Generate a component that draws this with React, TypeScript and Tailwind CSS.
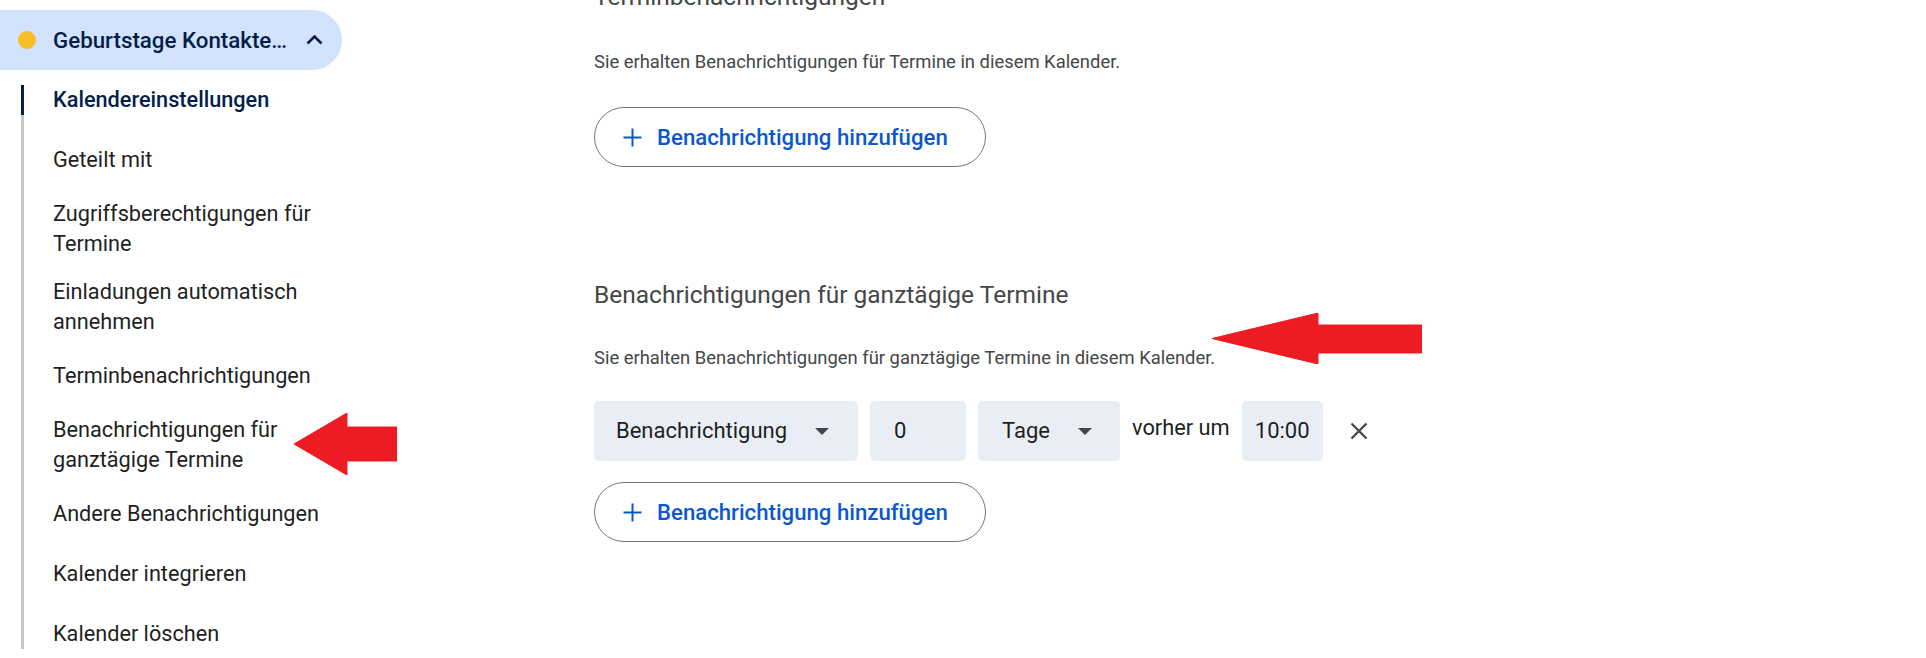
import React from "react";

const navItems: { label: React.ReactNode; active?: boolean; last?: boolean }[] = [
  { label: "Kalendereinstellungen", active: true },
  { label: "Geteilt mit" },
  { label: "Zugriffsberechtigungen für Termine" },
  { label: "Einladungen automatisch annehmen" },
  { label: "Terminbenachrichtigungen" },
  { label: "Benachrichtigungen für ganztägige Termine" },
  { label: "Andere Benachrichtigungen" },
  { label: "Kalender integrieren" },
  { label: "Kalender löschen" },
];

function Caret() {
  return (
    <svg width="14" height="7" viewBox="0 0 14 7" className="shrink-0">
      <path d="M0 0 L14 0 L7 7 Z" fill="#444746" />
    </svg>
  );
}

function AddButton() {
  return (
    <button className="flex h-[60px] w-[392px] items-center rounded-full border border-[#747775] bg-white pl-[28px]">
      <svg width="19" height="19" viewBox="0 0 19 19" className="shrink-0">
        <path d="M9.5 0.5 V18.5 M0.5 9.5 H18.5" stroke="#0b57d0" strokeWidth="2" />
      </svg>
      <span className="ml-[15px] text-[22.2px] font-medium leading-[28px] text-[#0b57d0]">
        Benachrichtigung hinzufügen
      </span>
    </button>
  );
}

function Arrow({ w, h, head, shaftTop, shaftBottom }: { w: number; h: number; head: number; shaftTop: number; shaftBottom: number }) {
  const mid = h / 2;
  return (
    <svg width={w} height={h} viewBox={`0 0 ${w} ${h}`}>
      <path
        d={`M0 ${mid} L${head} 0 L${head} ${shaftTop} L${w} ${shaftTop} L${w} ${shaftBottom} L${head} ${shaftBottom} L${head} ${h} Z`}
        fill="#ed1c24"
        stroke="#ed1c24"
        strokeWidth="1"
        strokeLinejoin="round"
      />
    </svg>
  );
}

export default function App() {
  return (
    <div className="relative flex h-[658px] w-full overflow-hidden bg-white font-['Roboto',sans-serif]">
      {/* Sidebar */}
      <aside className="w-[342px] shrink-0">
        <div className="mt-[10px] flex h-[60px] w-[342px] items-center rounded-r-full bg-[#d3e3fd]">
          <span className="ml-[18px] h-[18px] w-[18px] shrink-0 rounded-full bg-[#f6bf26]" />
          <span className="ml-[17px] flex-1 whitespace-nowrap text-[22.3px] font-medium leading-[30px] text-[#041e49]">
            Geburtstage Kontakte…
          </span>
          <svg width="17" height="10" viewBox="0 0 17 10" className="mr-[19px] shrink-0">
            <path d="M1.5 8.5 L8.5 1.5 L15.5 8.5" fill="none" stroke="#041e49" strokeWidth="2.6" />
          </svg>
        </div>
        <div className="ml-[21px] mt-[15px] flex flex-col border-l-[3px] border-[#c4c7c5]">
          <ul className="-my-[15px] flex flex-col">
            {navItems.map((item, i) => (
              <li
                key={i}
                className={`relative flex min-h-[60px] items-center py-[9px] pl-[29px] pr-[10px] text-[21.7px] leading-[30px] ${
                  item.active ? "font-medium text-[#041e49]" : "text-[#1f1f1f]"
                }`}
              >
                {item.active && (
                  <span className="absolute left-[-3px] top-[15px] h-[30px] w-[3px] bg-[#041e49]" />
                )}
                {item.label}
              </li>
            ))}
          </ul>
        </div>
      </aside>

      {/* Main */}
      <main className="flex flex-col pl-[252px]">
        <h2 className="-mt-[19px] whitespace-nowrap text-[24.5px] leading-[32px] text-[#444746]">
          Terminbenachrichtigungen
        </h2>
        <p className="mt-[37px] whitespace-nowrap text-[18.4px] leading-[24px] text-[#444746]">
          Sie erhalten Benachrichtigungen für Termine in diesem Kalender.
        </p>
        <div className="mt-[33px]">
          <AddButton />
        </div>

        <h2 className="mt-[112px] whitespace-nowrap text-[24.5px] leading-[32px] text-[#444746]">
          Benachrichtigungen für ganztägige Termine
        </h2>
        <p className="mt-[35px] whitespace-nowrap text-[18.4px] leading-[24px] text-[#444746]">
          Sie erhalten Benachrichtigungen für ganztägige Termine in diesem Kalender.
        </p>

        <div className="mt-[31px] flex h-[60px] items-center gap-[12px] text-[22px] leading-[28px] text-[#1f1f1f]">
          <div className="flex h-[60px] w-[264px] items-center justify-between rounded-[5px] bg-[#e9eef6] pl-[22px] pr-[29px]">
            <span>Benachrichtigung</span>
            <Caret />
          </div>
          <div className="flex h-[60px] w-[96px] items-center rounded-[5px] bg-[#e9eef6] pl-[24px]">
            <span>0</span>
          </div>
          <div className="flex h-[60px] w-[142px] items-center justify-between rounded-[5px] bg-[#e9eef6] pl-[24px] pr-[28px]">
            <span>Tage</span>
            <Caret />
          </div>
          <span className="whitespace-nowrap pb-[6px] text-[21.8px]">vorher um</span>
          <div className="flex h-[60px] w-[81px] items-center justify-center rounded-[5px] bg-[#e9eef6]">
            <span>10:00</span>
          </div>
          <button className="flex h-[48px] w-[48px] items-center justify-center">
            <svg width="18" height="18" viewBox="0 0 18 18">
              <path d="M1.5 1.5 L16.5 16.5 M16.5 1.5 L1.5 16.5" stroke="#444746" strokeWidth="2.3" />
            </svg>
          </button>
        </div>

        <div className="mt-[21px]">
          <AddButton />
        </div>
      </main>

      {/* Annotation arrows */}
      <div className="absolute left-[1212px] top-[313px]">
        <Arrow w={210} h={51} head={106} shaftTop={12} shaftBottom={40} />
      </div>
      <div className="absolute left-[294px] top-[413px]">
        <Arrow w={103} h={62} head={53} shaftTop={14} shaftBottom={48} />
      </div>
    </div>
  );
}
